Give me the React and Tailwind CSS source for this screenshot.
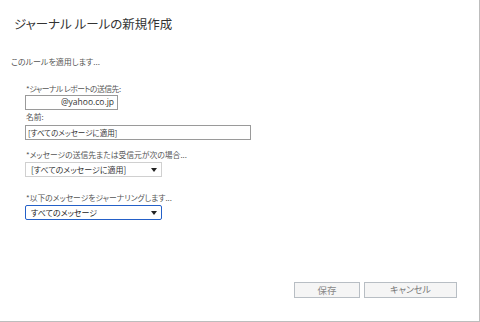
import React from "react";

function Arrow() {
  return (
    <svg width="6" height="4" viewBox="0 0 6 4" className="shrink-0">
      <path d="M0 0 L6 0 L3 4 Z" fill="#222" />
    </svg>
  );
}

export default function App() {
  return (
    <div className="w-[480px] h-[322px] bg-white border-r border-b border-[#bdbdbd] flex flex-col text-[#444] [font-family:'Noto_Sans_CJK_JP',sans-serif] [font-feature-settings:'palt']">
      <h1 className="pl-[14px] pt-[15px] text-[12.5px] leading-[18px] text-[#333] font-normal">
        ジャーナル ルールの新規作成
      </h1>
      <p className="ml-[11px] mt-[23px] text-[8px] leading-[12px] text-[#555]">
        このルールを適用します...
      </p>
      <div className="ml-[25px] flex flex-col items-start">
        <div className="mt-[15px] ml-[1px] text-[7.8px] leading-[12px] tracking-[-0.5px] text-[#555]">
          *ジャーナル レポートの送信先:
        </div>
        <div className="w-[93px] h-[15px] border border-[#9a9a9a] flex items-center justify-end pr-[3px] text-[8.5px] text-[#333] [font-family:'Open_Sans',sans-serif]">
          @yahoo.co.jp
        </div>
        <div className="mt-[1px] ml-[1px] text-[7.8px] leading-[12px] text-[#555]">
          名前:
        </div>
        <div className="mt-[2px] w-[226px] h-[15px] border border-[#9a9a9a] flex items-center pl-[2px] text-[7.5px] text-[#333]">
          [すべてのメッセージに適用]
        </div>
        <div className="mt-[9px] ml-[1px] text-[7.8px] leading-[12px] text-[#555]">
          *メッセージの送信先または受信元が次の場合...
        </div>
        <div className="mt-[1px] w-[137px] h-[15px] border border-[#d0d0d0] flex items-center justify-between pl-[5px] pr-[4px] text-[8px] text-[#333]">
          <span>[すべてのメッセージに適用]</span>
          <Arrow />
        </div>
        <div className="mt-[15px] ml-[1px] text-[7.8px] leading-[12px] text-[#555]">
          *以下のメッセージをジャーナリングします...
        </div>
        <div className="mt-[1px] w-[137px] h-[15px] border-[1.5px] border-[#2460c8] rounded-[2px] flex items-center justify-between pl-[5px] pr-[4px] text-[8px] text-[#222]">
          <span>すべてのメッセージ</span>
          <Arrow />
        </div>
      </div>
      <div className="mt-auto mb-[23px] mr-[22px] flex justify-end gap-[4px]">
        <button className="w-[66px] h-[16px] bg-[#f5f5f5] border border-[#b8bec4] text-[9.5px] text-[#888] flex items-center justify-center">
          保存
        </button>
        <button className="w-[93px] h-[16px] bg-[#f5f5f5] border border-[#b8bec4] text-[9px] text-[#777] flex items-center justify-center">
          キャンセル
        </button>
      </div>
    </div>
  );
}
